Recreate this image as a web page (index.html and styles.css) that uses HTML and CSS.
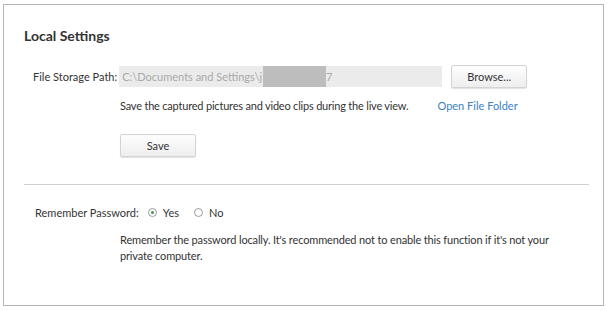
FILE: index.html
```html
<!DOCTYPE html>
<html lang="en">
<head>
    <meta charset="UTF-8">
    <title>Local Settings</title>
    <link rel="stylesheet" href="styles.css">
</head>
<body>
<div class="frame">
    <h2 class="title">Local Settings</h2>

    <div class="row path-row">
        <span class="label">File Storage Path:</span>
        <div class="path-input">
            <span>C:\Documents and Settings\j</span><span class="blur"></span><span>7</span>
        </div>
        <button class="btn browse">Browse...</button>
    </div>

    <div class="hint">
        <span class="hint-text">Save the captured pictures and video clips during the live view.</span>
        <a class="link" href="#">Open File Folder</a>
    </div>

    <div class="save-row">
        <button class="btn save">Save</button>
    </div>

    <hr class="divider">

    <div class="row radio-row">
        <span class="label">Remember Password:</span>
        <label class="radio checked"><span class="dot"></span>Yes</label>
        <label class="radio"><span class="dot"></span>No</label>
    </div>

    <p class="note">Remember the password locally. It's recommended not to enable this function if it's not your private computer.</p>
</div>
</body>
</html>
```

FILE: styles.css
```css
body {
    margin: 0;
    font-family: Lato, "Liberation Sans", sans-serif;
    font-size: 11px;
    color: #333;
    background: #fff;
}

.frame {
    margin: 4px 3px 0 3px;
    width: 601px;
    height: 302px;
    border: 1px solid #b4b4b4;
    box-sizing: border-box;
    padding: 0 0 0 20px;
}

.title {
    margin: 23px 0 0 0;
    font-size: 14px;
    font-weight: bold;
    color: #333;
    line-height: 16px;
}

.row {
    display: flex;
    align-items: center;
}

.label {
    white-space: nowrap;
}

.path-row {
    margin-top: 21px;
}

.path-row .label {
    margin-left: 9px;
    margin-right: 2px;
}

.path-input {
    width: 323px;
    height: 21px;
    background: #ebebeb;
    color: #a9a9a9;
    display: flex;
    align-items: center;
    padding-left: 3px;
    box-sizing: border-box;
    white-space: nowrap;
}

.blur {
    display: inline-block;
    width: 63px;
    height: 21px;
    background: #bdbdbd;
    margin-left: 1px;
}

.btn {
    font-family: inherit;
    font-size: 11px;
    color: #333;
    background: linear-gradient(#fefefe, #eeeeee);
    border: 1px solid #d4d4d4;
    border-radius: 2px;
    box-shadow: 0 1px 1px rgba(0, 0, 0, 0.12);
    height: 23px;
    width: 76px;
    padding: 0;
}

.browse {
    margin-left: 9px;
}

.hint {
    margin: 10px 0 0 96px;
    display: flex;
    gap: 29px;
    line-height: 16px;
}

.hint-text {
    letter-spacing: -0.2px;
}

.link {
    color: #3b7fc4;
    text-decoration: none;
}

.save-row {
    margin: 20px 0 0 96px;
}

.divider {
    margin: 27px 14px 0 0;
    border: none;
    border-top: 1px solid #d0d0d0;
}

.radio-row {
    margin-top: 21px;
}

.radio-row .label {
    margin-left: 11px;
    margin-right: 9px;
}

.radio {
    display: flex;
    align-items: center;
    margin-right: 15px;
}

.dot {
    width: 7px;
    height: 7px;
    border: 1px solid #9a9a9a;
    border-radius: 50%;
    margin-right: 6px;
    position: relative;
}

.radio.checked .dot::after {
    content: "";
    position: absolute;
    left: 2px;
    top: 2px;
    width: 3px;
    height: 3px;
    border-radius: 50%;
    background: #3e9a3e;
}

.note {
    margin: 13px 0 0 96px;
    width: 460px;
    line-height: 16px;
    letter-spacing: -0.15px;
}
```
